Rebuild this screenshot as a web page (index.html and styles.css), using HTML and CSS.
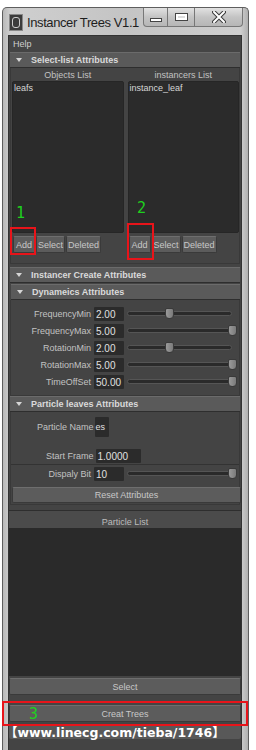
FILE: index.html
```html
<!DOCTYPE html>
<html lang="en">
<head>
<meta charset="UTF-8" />
<title>Instancer Trees V1.1</title>
<link rel="stylesheet" href="styles.css">
</head>
<body>

<div class="window">
  <div class="titlebar">
    <div class="app-icon"><span></span></div>
    <div class="title">Instancer Trees V1.1</div>
    <div class="caption-btns">
      <div class="cap-btn cap-min"><span class="glyph-min"></span></div>
      <div class="cap-btn cap-max"><span class="glyph-max"></span></div>
      <div class="cap-btn cap-close">
        <svg width="14" height="12" viewBox="0 0 14 12">
          <path d="M2 1 L12 11 M12 1 L2 11" stroke="#3a3a3a" stroke-width="4" stroke-linecap="round"/>
          <path d="M2 1 L12 11 M12 1 L2 11" stroke="#fff" stroke-width="2" stroke-linecap="round"/>
        </svg>
      </div>
    </div>
  </div>

  <div class="client">
    <div class="menubar"><span>Help</span></div>

    <div class="frame-head"><span class="arrow"></span>Select-list Attributes</div>
    <div class="frame-body lists">
      <div class="list-col">
        <div class="col-title">Objects List</div>
        <div class="listbox"><div class="item">leafs</div></div>
        <div class="btn-row">
          <button class="btn btn-add">Add</button>
          <button class="btn btn-select">Select</button>
          <button class="btn btn-del">Deleted</button>
        </div>
      </div>
      <div class="list-col">
        <div class="col-title">instancers List</div>
        <div class="listbox"><div class="item">instance_leaf</div></div>
        <div class="btn-row">
          <button class="btn btn-add">Add</button>
          <button class="btn btn-select">Select</button>
          <button class="btn btn-del">Deleted</button>
        </div>
      </div>
    </div>

    <div class="frame-head"><span class="arrow"></span>Instancer Create Attributes</div>
    <div class="frame-head sub"><span class="arrow"></span>Dynameics Attributes</div>
    <div class="frame-body sliders">
      <div class="slider-row">
        <label>FrequencyMin</label>
        <div class="field">2.00</div>
        <div class="slider"><div class="track"></div><div class="thumb" style="left: 40%"></div></div>
      </div>
      <div class="slider-row">
        <label>FrequencyMax</label>
        <div class="field">5.00</div>
        <div class="slider"><div class="track"></div><div class="thumb" style="left: 100%"></div></div>
      </div>
      <div class="slider-row">
        <label>RotationMin</label>
        <div class="field">2.00</div>
        <div class="slider"><div class="track"></div><div class="thumb" style="left: 40%"></div></div>
      </div>
      <div class="slider-row">
        <label>RotationMax</label>
        <div class="field">5.00</div>
        <div class="slider"><div class="track"></div><div class="thumb" style="left: 100%"></div></div>
      </div>
      <div class="slider-row">
        <label>TimeOffSet</label>
        <div class="field">50.00</div>
        <div class="slider"><div class="track"></div><div class="thumb" style="left: 100%"></div></div>
      </div>
    </div>

    <div class="frame-head"><span class="arrow"></span>Particle leaves Attributes</div>
    <div class="frame-body particle">
      <div class="name-row">
        <label>Particle Name</label>
        <div class="field field-tiny">es</div>
      </div>
      <div class="start-row">
        <label>Start Frame</label>
        <div class="field field-wide">1.0000</div>
      </div>
      <div class="slider-row">
        <label>Dispaly Bit</label>
        <div class="field">10</div>
        <div class="slider"><div class="track"></div><div class="thumb" style="left: 100%"></div></div>
      </div>
      <button class="btn btn-wide">Reset Attributes</button>
    </div>

    <div class="plist-head">Particle List</div>
    <div class="plist"></div>
    <button class="btn btn-wide btn-bottom">Select</button>
    <button class="btn btn-wide btn-bottom btn-create">Creat Trees</button>
    <div class="bottom-bar"></div>
  </div>
</div>

<!-- annotations drawn over the screenshot -->
<div class="mark mark-1">1</div>
<div class="mark mark-2">2</div>
<div class="mark mark-3">3</div>
<div class="box box-1"></div>
<div class="box box-2"></div>
<div class="box box-3"></div>
<div class="watermark">【www.linecg.com/tieba/1746】</div>

</body>
</html>
```

FILE: styles.css
```css
body {
  margin: 0;
  background: #fff;
  font-family: "Liberation Sans", Arial, sans-serif;
  position: relative;
}
.window {
  margin: 7px 0 0 2px;
  width: 234px;
  height: 742px;
  padding: 0 6px 0 5px;
  background: linear-gradient(90deg, #b9b9b9, #cfcfcf 3%, #c4c4c4 50%, #cfcfcf 97%, #b0b0b0);
  border: 1px solid #5e5e5e;
  border-bottom: none;
  border-radius: 5px 5px 0 0;
  display: flex;
  flex-direction: column;
}
.titlebar {
  height: 27px;
  display: flex;
  align-items: flex-start;
}
.app-icon {
  width: 12px;
  height: 15px;
  margin: 6px 0 0 1px;
  background: #3b3b3b;
  border: 1px solid #888;
  display: flex;
  align-items: center;
  justify-content: center;
}
.app-icon span {
  width: 6px;
  height: 9px;
  border: 1px solid #ccc;
  border-radius: 3px;
}
.title {
  margin: 7px 0 0 4px;
  font-size: 13px;
  letter-spacing: -0.4px;
  color: #1e1e1e;
  white-space: nowrap;
}
.caption-btns {
  margin-left: auto;
  margin-right: -1px;
  display: flex;
}
.cap-btn {
  height: 18px;
  border: 1px solid #777;
  border-top: none;
  background: linear-gradient(#e2e2e2, #c4c4c4 50%, #b6b6b6);
  display: flex;
  align-items: center;
  justify-content: center;
}
.cap-min {
  width: 23px;
  border-radius: 0 0 0 4px;
}
.cap-max {
  width: 26px;
  border-left: none;
}
.cap-close {
  width: 47px;
  border-left: none;
  border-radius: 0 0 4px 0;
}
.glyph-min {
  width: 10px;
  height: 2px;
  margin-top: 6px;
  background: #fff;
  border: 1px solid #444;
}
.glyph-max {
  width: 11px;
  height: 6px;
  border: 1px solid #444;
  outline: 2px solid #fff;
  outline-offset: -3px;
  background: #ddd;
}
.client {
  flex: 1;
  background: #444;
  border: 1px solid #333;
  border-bottom: none;
  display: flex;
  flex-direction: column;
  font-size: 9px;
  color: #c6c6c6;
  overflow: hidden;
}
.menubar {
  height: 16px;
  display: flex;
  align-items: center;
  padding-left: 4px;
  background: #454545;
  color: #cfcfcf;
}
.frame-head {
  height: 14px;
  margin: 0 1px;
  display: flex;
  align-items: center;
  font-weight: bold;
  color: #dadada;
  background: #5a5a5a;
  border-top: 1px solid #6b6b6b;
  border-bottom: 1px solid #2e2e2e;
  flex-shrink: 0;
}
.frame-head.sub {
  margin-top: 1px;
  margin-left: 2px;
}
.arrow {
  width: 0;
  height: 0;
  margin: 0 9px 0 6px;
  border-left: 3px solid transparent;
  border-right: 3px solid transparent;
  border-top: 4px solid #d6d6d6;
}
.frame-body {
  margin: 0 1px;
  background: #444;
  border: 1px solid #393939;
  border-top: none;
  flex-shrink: 0;
}
.lists {
  height: 195px;
  padding: 0 0 0 1px;
  display: flex;
  gap: 4px;
  margin-bottom: 3px;
}
.list-col {
  width: 112px;
  display: flex;
  flex-direction: column;
}
.col-title {
  height: 13px;
  text-align: center;
  line-height: 14px;
  color: #c2c2c2;
}
.listbox {
  height: 148px;
  background: #2b2b2b;
  border: 1px solid #262626;
  border-radius: 2px;
  padding: 1px;
}
.item {
  color: #d6d6d6;
}
.btn-row {
  display: flex;
  gap: 1px;
  margin: 3px 0 0 1px;
}
.btn {
  height: 17px;
  padding: 0;
  font-family: "Liberation Sans", Arial, sans-serif;
  font-size: 9px;
  color: #c8c8c8;
  background: #5c5c5c;
  border: 1px solid #3a3a3a;
  border-top-color: #6e6e6e;
  border-radius: 2px;
}
.btn-add { width: 22px; }
.btn-select { width: 29px; }
.btn-del { width: 35px; }
.sliders {
  padding: 5px 0 5px;
}
.slider-row {
  height: 17px;
  display: flex;
  align-items: center;
}
.slider-row label {
  width: 80px;
  text-align: right;
  color: #c2c2c2;
}
.field {
  height: 14px;
  line-height: 15px;
  padding-left: 2px;
  box-sizing: border-box;
  background: #2b2b2b;
  color: #e0e0e0;
  font-size: 10px;
  border-radius: 1px;
}
.slider-row .field {
  width: 30px;
  margin-left: 3px;
}
.slider {
  position: relative;
  width: 105px;
  height: 12px;
  margin-left: 3px;
  display: flex;
  align-items: center;
}
.track {
  flex: 1;
  height: 3px;
  background: #2a2a2a;
  border: 1px solid #555;
  border-radius: 3px;
}
.thumb {
  position: absolute;
  top: 0;
  width: 7px;
  height: 9px;
  margin-left: -4px;
  background: linear-gradient(90deg, #9a9a9a, #7a7a7a);
  border: 1px solid #3a3a3a;
  border-radius: 2px 2px 4px 4px;
}
.particle {
  padding: 5px 0 1px;
  display: flex;
  flex-direction: column;
}
.particle label {
  color: #c2c2c2;
}
.name-row {
  height: 20px;
  display: flex;
  align-items: center;
  padding-left: 26px;
}
.field-tiny {
  width: 14px;
  height: 20px;
  line-height: 20px;
  margin-left: 1px;
  padding-left: 1px;
  font-size: 9px;
  overflow: hidden;
}
.start-row {
  height: 15px;
  margin-top: 11px;
  display: flex;
  align-items: center;
  padding-left: 35px;
  padding-bottom: 1px;
  border-bottom: 1px solid #333;
}
.field-wide {
  width: 45px;
  margin-left: 2px;
}
.btn-wide {
  width: 229px;
  margin: 5px 0 0 1px;
  flex-shrink: 0;
}
.particle .btn-wide {
  height: 16px;
}
.plist-head {
  height: 17px;
  margin-top: 5px;
  line-height: 22px;
  text-align: center;
  background: #4b4b4b;
  border-top: 1px solid #2e2e2e;
  color: #bcbcbc;
  flex-shrink: 0;
}
.plist {
  height: 148px;
  background: #2a2a2a;
  flex-shrink: 0;
}
.btn-bottom {
  width: 232px;
  margin: 2px 0 0 0;
}
.btn-create {
  margin-top: 10px;
}
.bottom-bar {
  height: 14px;
  margin-top: 3px;
  background: #585858;
  border-radius: 2px;
  flex-shrink: 0;
}
.mark {
  position: absolute;
  font-family: "DejaVu Sans Mono", monospace;
  font-size: 15px;
  color: #1ed11e;
}
.mark-1 { left: 16px; top: 204px; }
.mark-2 { left: 137px; top: 199px; }
.mark-3 { left: 29px; top: 705px; }
.box {
  position: absolute;
  border: 2px solid #e8141a;
}
.box-1 { left: 10px; top: 227px; width: 22px; height: 24px; }
.box-2 { left: 127px; top: 223px; width: 23px; height: 33px; }
.box-3 { left: 2px; top: 701px; width: 242px; height: 21px; }
.watermark {
  position: absolute;
  left: 5px;
  top: 722px;
  font-family: "DejaVu Sans", "Noto Sans CJK SC", sans-serif;
  font-weight: bold;
  font-size: 12.5px;
  color: #fff;
  white-space: nowrap;
}
```
